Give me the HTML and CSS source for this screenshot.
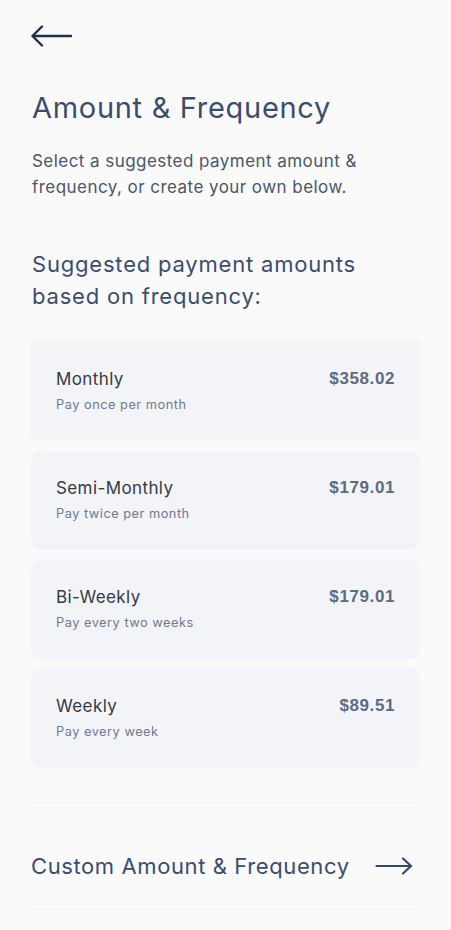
FILE: index.html
```html
<!DOCTYPE html>
<html lang="en">
<head>
<meta charset="utf-8">
<title>Amount &amp; Frequency</title>
<link rel="stylesheet" href="styles.css">
</head>
<body>
<main class="page">
  <button class="back" aria-label="Back">
    <svg width="42" height="22" viewBox="0 0 42 22" fill="none" stroke="#1d2f4c" stroke-width="2.4" stroke-linecap="round" stroke-linejoin="round">
      <path d="M40 11H2"/>
      <path d="M11 1.5L1.5 11L11 20.5"/>
    </svg>
  </button>

  <h1 class="title">Amount &amp; Frequency</h1>
  <p class="lead">Select a suggested payment amount &amp; frequency, or create your own below.</p>

  <h2 class="subtitle">Suggested payment amounts based on frequency:</h2>

  <ul class="options">
    <li class="option option-first">
      <div class="option-text">
        <span class="option-name">Monthly</span>
        <span class="option-desc">Pay once per month</span>
      </div>
      <span class="option-amount">$358.02</span>
    </li>
    <li class="option">
      <div class="option-text">
        <span class="option-name">Semi-Monthly</span>
        <span class="option-desc">Pay twice per month</span>
      </div>
      <span class="option-amount">$179.01</span>
    </li>
    <li class="option">
      <div class="option-text">
        <span class="option-name">Bi-Weekly</span>
        <span class="option-desc">Pay every two weeks</span>
      </div>
      <span class="option-amount">$179.01</span>
    </li>
    <li class="option">
      <div class="option-text">
        <span class="option-name">Weekly</span>
        <span class="option-desc">Pay every week</span>
      </div>
      <span class="option-amount">$89.51</span>
    </li>
  </ul>

  <a class="custom" href="#">
    <span>Custom Amount &amp; Frequency</span>
    <svg width="38" height="18" viewBox="0 0 38 18" fill="none" stroke="#34496b" stroke-width="2.2" stroke-linecap="round" stroke-linejoin="round">
      <path d="M1.5 9H36"/>
      <path d="M28 1.5L36 9L28 16.5"/>
    </svg>
  </a>
</main>
</body>
</html>
```
FILE: styles.css
```css
* { box-sizing: border-box; }
html, body {
  margin: 0;
  padding: 0;
  background: #fafafb;
}
body {
  font-family: "Inter", "Noto Sans", sans-serif;
  color: #3b4d6b;
}
.page {
  width: 451px;
  min-height: 930px;
  padding: 25px 31px 0 31px;
  display: flex;
  flex-direction: column;
}
.back {
  align-self: flex-start;
  border: 0;
  background: none;
  padding: 0;
  margin: 0;
  height: 22px;
  display: flex;
  cursor: pointer;
}
.title {
  margin: 43px 0 0 1px;
  font-size: 29px;
  font-weight: 400;
  line-height: 36px;
  letter-spacing: 0.7px;
  color: #3a4d6c;
}
.lead {
  margin: 22px 0 0 1px;
  font-size: 17px;
  line-height: 26px;
  color: #4c5568;
  letter-spacing: 0.45px;
}
.subtitle {
  margin: 48px 0 0 1px;
  font-size: 22px;
  font-weight: 400;
  line-height: 32px;
  letter-spacing: 0.8px;
  color: #3a4d6c;
}
.options {
  list-style: none;
  margin: 29px 0 0 0;
  padding: 0;
  display: flex;
  flex-direction: column;
  gap: 10px;
}
.option {
  height: 99px;
  background: #f3f4f7;
  border-radius: 10px;
  padding: 26px 25px 0 25px;
  display: flex;
  justify-content: space-between;
  align-items: flex-start;
}
.option-first {
  height: 100px;
  border-radius: 3px;
  padding-top: 27px;
}
.option-text {
  display: flex;
  flex-direction: column;
}
.option-name {
  font-size: 17px;
  line-height: 22px;
  letter-spacing: 0.4px;
  color: #343a44;
}
.option-desc {
  margin-top: 6px;
  font-size: 12.8px;
  line-height: 18px;
  letter-spacing: 0.5px;
  color: #6d7a90;
}
.option-amount {
  font-family: "Liberation Sans", Arial, sans-serif;
  font-weight: 700;
  font-size: 17px;
  line-height: 22px;
  color: #5d6b81;
  letter-spacing: 0.6px;
}
.custom {
  margin-top: 34px;
  height: 108px;
  border-top: 1px solid #eeeff2;
  border-bottom: 1px solid #eeeff2;
  display: flex;
  align-items: center;
  justify-content: space-between;
  padding: 20px 7px 0 0;
  text-decoration: none;
  font-size: 22px;
  letter-spacing: 0.6px;
  color: #3a4d6c;
}
```
